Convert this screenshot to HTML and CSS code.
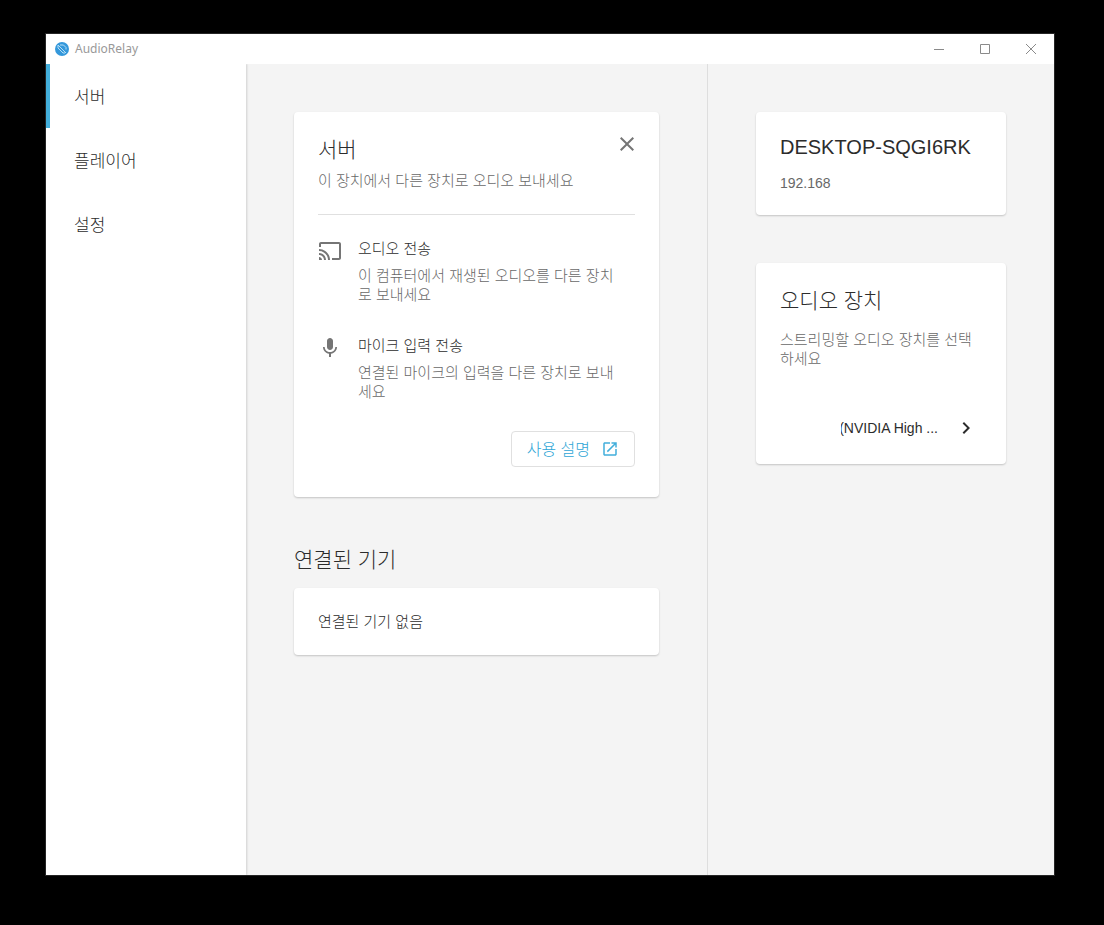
FILE: index.html
```
<!DOCTYPE html>
<html lang="ko">
<head>
  <meta charset="UTF-8">
  <meta name="viewport" content="width=device-width, initial-scale=1.0">
  <title>AudioRelay</title>
  <link rel="stylesheet" href="styles.css">
</head>
<body>
  <div class="window">
    <header class="titlebar">
      <svg class="logo" viewBox="0 0 16 16" aria-hidden="true">
        <circle cx="8" cy="8" r="7" fill="#3498db"/>
        <path d="M4 4l8 8M4 4v3l5 5h2M6 4h3.500l2.500 2.500v2" fill="none" stroke="#b5def5" stroke-width="1"/>
      </svg>
      <span class="app-name">AudioRelay</span>
      <div class="window-controls">
        <button type="button" aria-label="최소화">
          <svg viewBox="0 0 12 12"><path d="M1 6.500h10"/></svg>
        </button>
        <button type="button" aria-label="최대화">
          <svg viewBox="0 0 12 12"><path d="M1.500 1.500h9v9h-9z"/></svg>
        </button>
        <button type="button" aria-label="닫기">
          <svg viewBox="0 0 12 12"><path d="M1 1l10 10M11 1L1 11"/></svg>
        </button>
      </div>
    </header>

    <div class="layout">
      <nav class="sidebar">
        <a class="active" href="#server">서버</a>
        <a href="#player">플레이어</a>
        <a href="#settings">설정</a>
      </nav>

      <main class="content" id="server">
        <section class="card intro">
          <div class="intro-head">
            <div>
              <h1>서버</h1>
              <p>이 장치에서 다른 장치로 오디오 보내세요</p>
            </div>
            <button class="close" type="button" aria-label="닫기">
              <svg class="icon" viewBox="0 0 24 24"><path d="M19 6.410L17.590 5 12 10.590 6.410 5 5 6.410 10.590 12 5 17.590 6.410 19 12 13.410 17.590 19 19 17.590 13.410 12z"/></svg>
            </button>
          </div>

          <div class="feature">
            <svg class="icon" viewBox="0 0 24 24"><path d="M21 3H3c-1.100 0-2 .9-2 2v3h2V5h18v14h-7v2h7c1.100 0 2-.9 2-2V5c0-1.100-.9-2-2-2zM1 18v3h3c0-1.660-1.340-3-3-3zm0-4v2c2.760 0 5 2.240 5 5h2c0-3.870-3.130-7-7-7zm0-4v2c4.970 0 9 4.030 9 9h2c0-6.080-4.930-11-11-11z"/></svg>
            <div>
              <h2>오디오 전송</h2>
              <p>이 컴퓨터에서 재생된 오디오를 다른 장치<br>로 보내세요</p>
            </div>
          </div>

          <div class="feature">
            <svg class="icon" viewBox="0 0 24 24"><path d="M12 14c1.660 0 2.990-1.340 2.990-3L15 5c0-1.660-1.340-3-3-3S9 3.340 9 5v6c0 1.660 1.340 3 3 3zm5.300-3c0 3-2.540 5.100-5.300 5.100S6.700 14 6.700 11H5c0 3.410 2.720 6.230 6 6.720V21h2v-3.280c3.280-.48 6-3.300 6-6.720h-1.700z"/></svg>
            <div>
              <h2>마이크 입력 전송</h2>
              <p>연결된 마이크의 입력을 다른 장치로 보내<br>세요</p>
            </div>
          </div>

          <div class="actions">
            <button class="guide" type="button">
              사용 설명
              <svg viewBox="0 0 24 24"><path d="M19 19H5V5h7V3H5c-1.110 0-2 .9-2 2v14c0 1.100.89 2 2 2h14c1.100 0 2-.9 2-2v-7h-2v7zM14 3v2h3.590l-9.830 9.830 1.410 1.410L19 6.410V10h2V3h-7z"/></svg>
            </button>
          </div>
        </section>

        <h2 class="section-title">연결된 기기</h2>
        <section class="card devices">연결된 기기 없음</section>
      </main>

      <aside class="details">
        <section class="card host">
          <h2>DESKTOP-SQGI6RK</h2>
          <p>192.168</p>
        </section>

        <section class="card audio">
          <h2>오디오 장치</h2>
          <p>스트리밍할 오디오 장치를 선택<br>하세요</p>
          <button class="device-picker" type="button">
            <span class="device-name"><span>(NVIDIA High ...</span></span>
            <svg class="icon" viewBox="0 0 24 24"><path d="M10 6L8.590 7.410 13.170 12l-4.580 4.590L10 18l6-6z"/></svg>
          </button>
        </section>
      </aside>
    </div>
  </div>
</body>
</html>
```
FILE: styles.css
```
* {
  box-sizing: border-box;
}

body {
  display: flex;
  min-height: 100vh;
  margin: 0;
  padding: 34px 50px 50px 46px;
  background-color: #000;
  color: #2c2c2c;
  font-family: "Liberation Sans", "Noto Sans CJK KR", sans-serif;
  font-size: 15px;
  font-weight: 300;
  line-height: 19px;
}

h1,
h2,
p {
  margin: 0;
  font-weight: 300;
}

p {
  color: #686868;
}

button {
  padding: 0;
  border: none;
  background: none;
  color: inherit;
  font: inherit;
  cursor: pointer;
}

svg {
  display: block;
  flex: none;
}

.icon {
  width: 24px;
  height: 24px;
  fill: #757575;
}

.window {
  display: flex;
  flex-direction: column;
  flex: 1;
  min-width: 0;
  background-color: #f4f4f4;
  box-shadow: 0 0 0 1px #252525;
}

/* タイトルバー */
.titlebar {
  position: relative;
  z-index: 1;
  display: flex;
  align-items: center;
  height: 30px;
  padding-left: 8px;
  background-color: #fff;
}

.logo {
  width: 16px;
  height: 16px;
}

.app-name {
  margin-left: 5px;
  color: #999;
  font-family: "Noto Sans", sans-serif;
  font-size: 12px;
  font-weight: 400;
  line-height: 18px;
}

.window-controls {
  display: flex;
  margin-left: auto;
}

.window-controls button {
  display: flex;
  align-items: center;
  justify-content: center;
  width: 46px;
  height: 30px;
}

.window-controls svg {
  width: 12px;
  height: 12px;
  fill: none;
  stroke: #8a8a8a;
}

.layout {
  display: flex;
  flex: 1;
}

.sidebar {
  flex: 0 0 200px;
  background-color: #fff;
  box-shadow: 1px 0 2px rgba(0, 0, 0, 0.15);
}

.sidebar a {
  display: flex;
  align-items: center;
  height: 64px;
  padding: 3px 0 0 24px;
  border-left: 4px solid transparent;
  color: #2c2c2c;
  font-size: 17px;
  text-decoration: none;
}

.sidebar .active {
  border-left-color: #42aedb;
}

.content {
  flex: 1;
  min-width: 0;
  padding: 48px;
}

.details {
  display: flex;
  flex-direction: column;
  gap: 48px;
  flex: 0 0 347px;
  padding: 48px;
  border-left: 1px solid #dedede;
}

.card {
  padding: 24px;
  border-radius: 4px;
  background-color: #fff;
  box-shadow: 0 1px 2px rgba(0, 0, 0, 0.2);
}

.intro {
  padding-bottom: 30px;
}

.intro-head {
  display: flex;
  justify-content: space-between;
  height: 79px;
  border-bottom: 1px solid #e0e0e0;
}

.intro-head h1,
.section-title,
.audio h2 {
  font-size: 21px;
  line-height: 28px;
}

.intro-head p {
  margin-top: 7px;
}

.close {
  width: 24px;
  height: 24px;
  margin-right: -4px;
  margin-top: -4px;
}

.feature {
  display: flex;
  gap: 16px;
  margin-top: 24px;
}

.feature + .feature {
  margin-top: 32px;
}

.feature h2 {
  font-size: 15px;
  line-height: 19px;
}

.feature p {
  margin-top: 8px;
}

.actions {
  display: flex;
  justify-content: flex-end;
  margin-top: 30px;
}

.guide {
  display: flex;
  align-items: center;
  gap: 11px;
  height: 36px;
  padding: 0 15px;
  border: 1px solid #e0e0e0;
  border-radius: 4px;
  color: #2fa6d6;
  font-size: 16px;
}

.guide svg {
  width: 18px;
  height: 18px;
  fill: #42aedb;
}

.section-title {
  margin: 49px 0 14px;
}

.host h2 {
  font-size: 20px;
  line-height: 22px;
}

.host p {
  margin-top: 16px;
  margin-bottom: -2px;
  font-size: 14px;
}

.audio p {
  margin-top: 15px;
}

.device-picker {
  display: flex;
  align-items: center;
  gap: 16px;
  height: 24px;
  margin: 48px 4px 0 auto;
  font-size: 14px;
}

.device-picker .icon {
  fill: #2c2c2c;
}

/* 長い名前は左側が切れる */
.device-name {
  display: flex;
  justify-content: flex-end;
  width: 97px;
  overflow: hidden;
  white-space: nowrap;
}
```
